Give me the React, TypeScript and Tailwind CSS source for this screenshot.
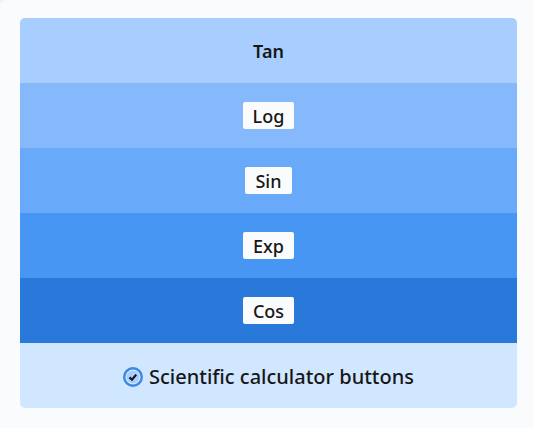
const rows = [
  { label: 'Tan', band: 'bg-[#a8ceff]', key: 'bg-transparent font-semibold' },
  { label: 'Log', band: 'bg-[#86b9fb]', key: 'bg-[#fafbfd]' },
  { label: 'Sin', band: 'bg-[#68a9fa]', key: 'bg-[#fafbfd]' },
  { label: 'Exp', band: 'bg-[#4796f4]', key: 'bg-[#fafbfd]' },
  { label: 'Cos', band: 'bg-[#2979db]', key: 'bg-[#fafbfd]' },
];

export default function App() {
  return (
    <div className="min-h-screen bg-[#f5f1ee]">
      <main className="min-h-screen rounded-tl-md bg-[#f9fbfd] pt-[18px] pr-[17px] pb-5 pl-5 font-['Noto_Sans',sans-serif] text-lg font-medium text-[#171717]">
        <div className="overflow-hidden rounded-[5px]">
          {rows.map((row) => (
            <div key={row.label} className={`flex h-[65px] items-center justify-center ${row.band}`}>
              <button type="button" className={`rounded-xs px-2.5 pt-0.5 leading-[25px] ${row.key}`}>
                {row.label}
              </button>
            </div>
          ))}
          <label className="flex h-[65px] items-center justify-center gap-1.5 bg-[#d0e7ff] pt-0.5 text-xl">
            <span className="grid size-5 place-items-center">
              <input
                type="checkbox"
                defaultChecked
                className="peer col-start-1 row-start-1 size-5 appearance-none rounded-full"
              />
              <svg
                viewBox="0 0 20 20"
                className="pointer-events-none col-start-1 row-start-1 size-5 fill-none peer-checked:[&>path]:visible"
                aria-hidden="true"
              >
                <circle cx="10" cy="10" r="8.8" stroke="#3b87e8" strokeWidth="2.4" />
                <circle cx="10" cy="10" r="6.3" fill="#a8ceff" />
                <path className="invisible" d="M6.5 10.4 9 12.7 13.2 7.6" stroke="#111820" strokeWidth="2.2" />
              </svg>
            </span>
            Scientific calculator buttons
          </label>
        </div>
      </main>
    </div>
  );
}
